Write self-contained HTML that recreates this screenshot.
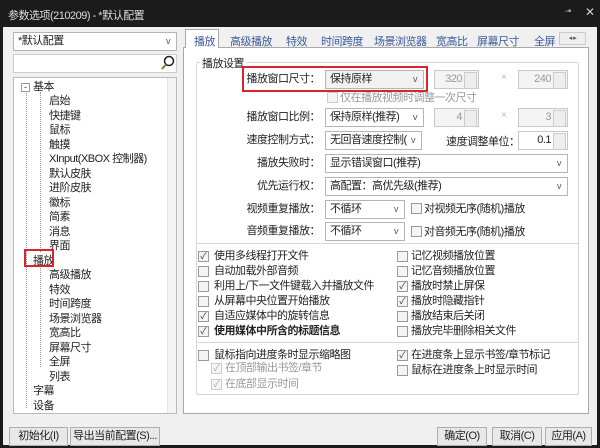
<!DOCTYPE html>
<html><head><meta charset="utf-8"><style>
*{margin:0;padding:0;box-sizing:border-box}
body{width:600px;height:448px;background:#1b1b1b;position:relative;overflow:hidden;font:11px "Liberation Sans","Noto Sans CJK SC",sans-serif;letter-spacing:-0.5px;color:#222}
.a{position:absolute;white-space:nowrap}
#win{position:absolute;left:3px;top:27px;width:594px;height:418px;background:#f0f0f0}
.box{position:absolute;background:#fff;border:1px solid #a8a8a8}
.combo{position:absolute;background:#fff;border:1px solid #b5b5b5;height:19px;line-height:17px;padding-left:4px;overflow:hidden}
.combo:after{content:"v";position:absolute;right:6px;top:0;font-size:9px;color:#555;background:inherit}
.spin{position:absolute;background:#f4f4f4;border:1px solid #c8c8c8;height:19px;line-height:17px;text-align:right;padding-right:16px;color:#999}
.spin:after{content:"";position:absolute;right:1px;top:1px;width:11px;height:15px;border:1px solid #ccc;background:#eee}
.cb{position:absolute;width:11px;height:11px;border:1px solid #9a9a9a;background:#f4f4f4;font-size:9px;line-height:9px;text-align:center;color:#334;letter-spacing:0}
.t{position:absolute;white-space:nowrap;line-height:14px}
.lbl{position:absolute;white-space:nowrap;text-align:right;width:120px;line-height:19px}
.btn{position:absolute;border:1px solid #adadad;background:#e8e8e8;height:19px;line-height:17px;text-align:center}
.tab{position:absolute;top:33px;color:#3a5a9a}
</style></head><body>
<div class="a" style="left:8px;top:7px;color:#ddd">参数选项(210209) - *默认配置</div>
<div class="a" style="left:565px;top:6px;color:#aaa;font-size:10px">-▪</div>
<div class="a" style="left:585px;top:5px;color:#ccc;font-size:12px">✕</div>
<div id="win"></div>
<div class="combo" style="left:13px;top:32px;width:164px">*默认配置</div>
<div class="box" style="left:13px;top:54px;width:164px;height:19px;border-color:#ccc"></div>
<svg class="a" style="left:160px;top:55px" width="16" height="16"><circle cx="9" cy="6" r="4.5" fill="none" stroke="#222" stroke-width="1.5"/><line x1="6" y1="9.5" x2="2" y2="14" stroke="#8a7a20" stroke-width="2"/></svg>
<div class="box" style="left:13px;top:77px;width:164px;height:337px;border-color:#bbb;overflow:hidden">
<div class="a" style="left:153px;top:0;width:10px;height:336px;background:#f4f4f4;border-left:1px solid #e4e4e4"></div>
<div class="a" style="left:12px;top:12px;width:1px;height:318px;border-left:1px dotted #999"></div>
<div class="a" style="left:26px;top:14px;width:1px;height:160px;border-left:1px dotted #999"></div>
<div class="a" style="left:26px;top:182px;width:1px;height:107px;border-left:1px dotted #999"></div>
<div class="cb" style="left:7px;top:5px;width:9px;height:9px;font-size:9px;line-height:7px;background:#fff">-</div>
<div class="t" style="left:19px;top:2px">基本</div>
<div class="t" style="left:35px;top:16px">启始</div>
<div class="t" style="left:35px;top:30.5px">快捷键</div>
<div class="t" style="left:35px;top:45px">鼠标</div>
<div class="t" style="left:35px;top:59.5px">触摸</div>
<div class="t" style="left:35px;top:74px">XInput(XBOX 控制器)</div>
<div class="t" style="left:35px;top:88.5px">默认皮肤</div>
<div class="t" style="left:35px;top:103px">进阶皮肤</div>
<div class="t" style="left:35px;top:117.5px">徽标</div>
<div class="t" style="left:35px;top:132px">简素</div>
<div class="t" style="left:35px;top:146.5px">消息</div>
<div class="t" style="left:35px;top:161px">界面</div>
<div class="t" style="left:19px;top:175.5px">播放</div>
<div class="t" style="left:35px;top:190px">高级播放</div>
<div class="t" style="left:35px;top:204.5px">特效</div>
<div class="t" style="left:35px;top:219px">时间跨度</div>
<div class="t" style="left:35px;top:233.5px">场景浏览器</div>
<div class="t" style="left:35px;top:248px">宽高比</div>
<div class="t" style="left:35px;top:262.5px">屏幕尺寸</div>
<div class="t" style="left:35px;top:277px">全屏</div>
<div class="t" style="left:35px;top:291.5px">列表</div>
<div class="t" style="left:19px;top:306px">字幕</div>
<div class="t" style="left:19px;top:320.5px">设备</div>
</div>
<div class="a" style="left:24px;top:249px;width:30px;height:18px;border:2px solid #d8242c"></div>
<div class="a" style="left:183px;top:47px;width:406px;height:367px;background:#fff;border:1px solid #a8a8a8"></div>
<div class="a" style="left:185px;top:29px;width:34px;height:19px;background:#fff;border:1px solid #a8a8a8;border-bottom:none"></div>
<div class="tab" style="left:194px">播放</div>
<div class="tab" style="left:230px">高级播放</div>
<div class="tab" style="left:286px">特效</div>
<div class="tab" style="left:321px">时间跨度</div>
<div class="tab" style="left:374px">场景浏览器</div>
<div class="tab" style="left:436px">宽高比</div>
<div class="tab" style="left:477px">屏幕尺寸</div>
<div class="tab" style="left:534px">全屏</div>
<div class="a" style="left:559px;top:32px;width:27px;height:13px;border:1px solid #ccc;background:#eee;font-size:7px;line-height:11px;color:#555;text-align:center">◂ ▸</div>
<div class="a" style="left:196px;top:62px;width:383px;height:333px;border:1px solid #d6d6d6;border-radius:2px"></div>
<div class="a" style="left:200px;top:55px;background:#fff;padding:0 2px">播放设置</div>
<div class="lbl" style="left:200px;top:70px">播放窗口尺寸：</div>
<div class="combo" style="left:325px;top:70px;width:99px;background:#f2f2f2">保持原样</div>
<div class="a" style="left:242px;top:66px;width:186px;height:26px;border:2px solid #d8242c"></div>
<div class="spin" style="left:434px;top:70px;width:45px">320</div>
<div class="a" style="left:501px;top:72px;color:#bbb;font-size:10px">×</div>
<div class="spin" style="left:518px;top:70px;width:50px">240</div>
<div class="cb" style="left:327px;top:92px;border-color:#ccc"></div>
<div class="t" style="left:340px;top:91px;color:#999">仅在播放视频时调整一次尺寸</div>
<div class="lbl" style="left:200px;top:108px">播放窗口比例：</div>
<div class="combo" style="left:325px;top:108px;width:99px">保持原样(推荐)</div>
<div class="spin" style="left:434px;top:108px;width:45px">4</div>
<div class="a" style="left:501px;top:110px;color:#bbb;font-size:10px">×</div>
<div class="spin" style="left:518px;top:108px;width:50px">3</div>
<div class="lbl" style="left:200px;top:131px">速度控制方式：</div>
<div class="combo" style="left:325px;top:131px;width:97px">无回音速度控制(</div>
<div class="a" style="left:446px;top:133px">速度调整单位：</div>
<div class="spin" style="left:518px;top:131px;width:50px;background:#fff;color:#222">0.1</div>
<div class="lbl" style="left:200px;top:154px">播放失败时：</div>
<div class="combo" style="left:325px;top:154px;width:243px">显示错误窗口(推荐)</div>
<div class="lbl" style="left:200px;top:177px">优先运行权：</div>
<div class="combo" style="left:325px;top:177px;width:243px">高配置：高优先级(推荐)</div>
<div class="lbl" style="left:200px;top:200px">视频重复播放：</div>
<div class="combo" style="left:325px;top:200px;width:80px">不循环</div>
<div class="cb" style="left:411px;top:203px"></div>
<div class="t" style="left:424px;top:202px">对视频无序(随机)播放</div>
<div class="lbl" style="left:200px;top:222px">音频重复播放：</div>
<div class="combo" style="left:325px;top:222px;width:80px">不循环</div>
<div class="cb" style="left:411px;top:226px"></div>
<div class="t" style="left:424px;top:225px">对音频无序(随机)播放</div>
<div class="a" style="left:197px;top:243px;width:381px;height:1px;background:#d6d6d6"></div>
<div class="cb" style="left:198px;top:251px">✓</div><div class="t" style="left:214px;top:249px">使用多线程打开文件</div>
<div class="cb" style="left:198px;top:266px"></div><div class="t" style="left:214px;top:264px">自动加载外部音频</div>
<div class="cb" style="left:198px;top:281px"></div><div class="t" style="left:214px;top:279px">利用上/下一文件键载入并播放文件</div>
<div class="cb" style="left:198px;top:296px"></div><div class="t" style="left:214px;top:294px">从屏幕中央位置开始播放</div>
<div class="cb" style="left:198px;top:311px">✓</div><div class="t" style="left:214px;top:309px">自适应媒体中的旋转信息</div>
<div class="cb" style="left:198px;top:326px">✓</div><div class="t" style="left:214px;top:324px;font-weight:bold">使用媒体中所含的标题信息</div>
<div class="cb" style="left:397px;top:251px"></div><div class="t" style="left:411px;top:249px">记忆视频播放位置</div>
<div class="cb" style="left:397px;top:266px"></div><div class="t" style="left:411px;top:264px">记忆音频播放位置</div>
<div class="cb" style="left:397px;top:281px">✓</div><div class="t" style="left:411px;top:279px">播放时禁止屏保</div>
<div class="cb" style="left:397px;top:296px">✓</div><div class="t" style="left:411px;top:294px">播放时隐藏指针</div>
<div class="cb" style="left:397px;top:311px"></div><div class="t" style="left:411px;top:309px">播放结束后关闭</div>
<div class="cb" style="left:397px;top:326px"></div><div class="t" style="left:411px;top:324px">播放完毕删除相关文件</div>
<div class="a" style="left:197px;top:342px;width:381px;height:1px;background:#d6d6d6"></div>
<div class="cb" style="left:198px;top:350px"></div><div class="t" style="left:214px;top:348px">鼠标指向进度条时显示缩略图</div>
<div class="cb" style="left:211px;top:363px;color:#aaa;border-color:#ccc">✓</div><div class="t" style="left:225px;top:361px;color:#999">在顶部输出书签/章节</div>
<div class="cb" style="left:211px;top:379px;color:#aaa;border-color:#ccc">✓</div><div class="t" style="left:225px;top:377px;color:#999">在底部显示时间</div>
<div class="cb" style="left:397px;top:350px">✓</div><div class="t" style="left:411px;top:348px">在进度条上显示书签/章节标记</div>
<div class="cb" style="left:397px;top:365px"></div><div class="t" style="left:411px;top:363px">鼠标在进度条上时显示时间</div>
<div class="btn" style="left:9px;top:427px;width:59px">初始化(I)</div>
<div class="btn" style="left:70px;top:427px;width:90px">导出当前配置(S)...</div>
<div class="btn" style="left:437px;top:427px;width:50px">确定(O)</div>
<div class="btn" style="left:492px;top:427px;width:50px">取消(C)</div>
<div class="btn" style="left:545px;top:427px;width:47px">应用(A)</div>
</body></html>
